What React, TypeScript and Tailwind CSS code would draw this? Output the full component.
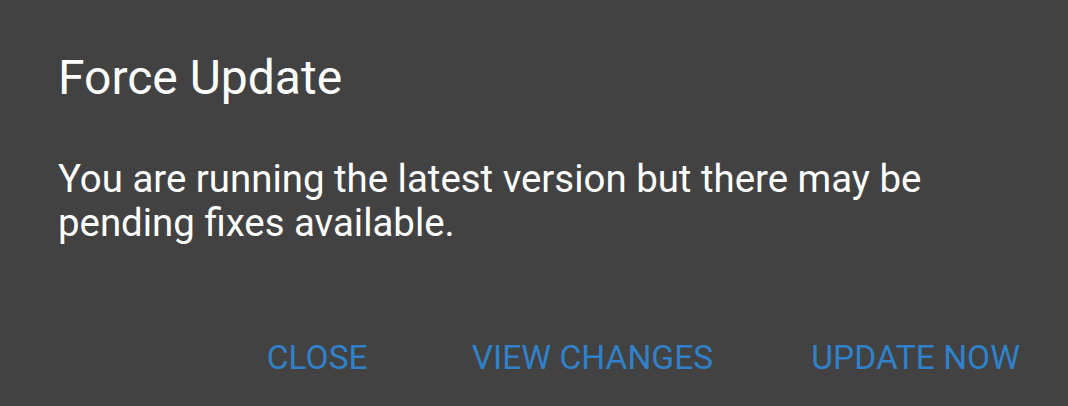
export default function App() {
  return (
    <div
      className="w-[1068px] h-[406px] bg-[#424242] flex flex-col"
      style={{ fontFamily: "Roboto, 'Noto Sans', sans-serif" }}
    >
      <div className="pl-[58px] pt-[50px]">
        <h1 className="text-[48px] leading-[56px] text-white font-normal">Force Update</h1>
        <p className="mt-[51px] text-[38.4px] leading-[44px] text-white w-[960px]">
          You are running the latest version but there may be
          <br />
          pending fixes available.
        </p>
      </div>
      <div className="mt-auto mb-[28px] flex justify-end items-center pr-[48px] text-[33.6px] leading-[40px] text-[#3081c9]">
        <button className="uppercase">Close</button>
        <button className="uppercase ml-[104px]">View Changes</button>
        <button className="uppercase ml-[98px]">Update Now</button>
      </div>
    </div>
  );
}
